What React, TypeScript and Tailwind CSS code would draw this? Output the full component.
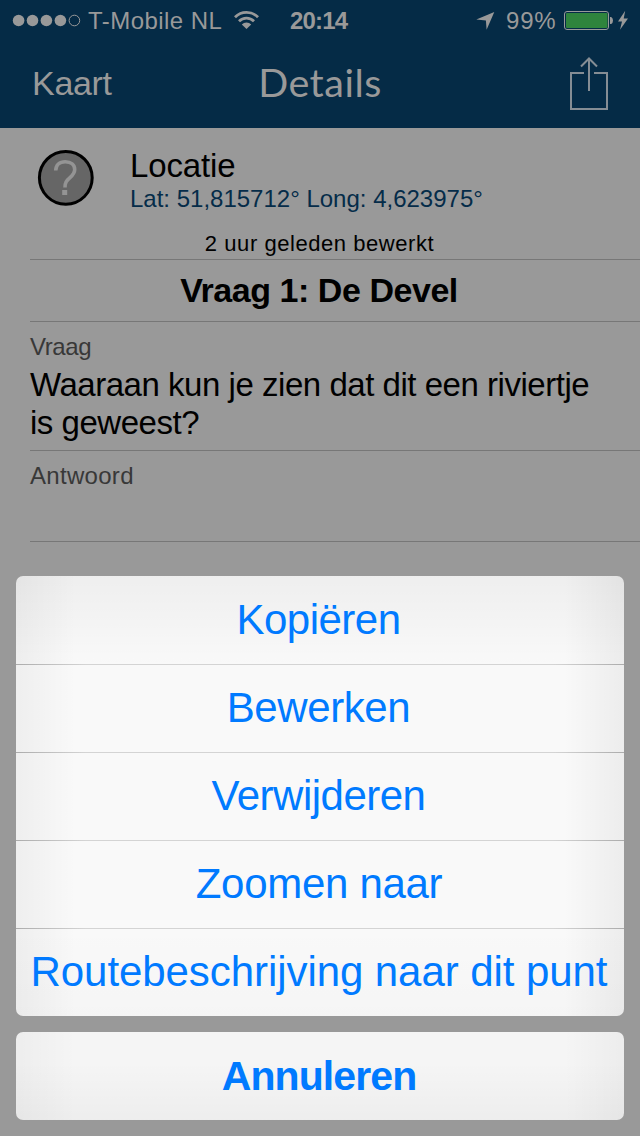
import React from "react";

const actions = [
  { label: "Kopiëren", style: "pr-[3px] tracking-[-0.5px]" },
  { label: "Bewerken", style: "pr-[3px] tracking-[-0.4px]" },
  { label: "Verwijderen", style: "pr-[3px] tracking-[-0.5px]" },
  { label: "Zoomen naar", style: "pr-[2px] tracking-[-0.3px]" },
  { label: "Routebeschrijving naar dit punt", style: "pr-[2px] tracking-[-0.07px]" },
];

function StatusBar() {
  return (
    <div className="flex h-10 items-center whitespace-nowrap text-[24px] leading-none">
      <svg className="ml-3 shrink-0" width="70" height="40" viewBox="12 0 70 40" fill="currentColor">
        <circle cx="18.6" cy="20.5" r="5.8" />
        <circle cx="32.5" cy="20.5" r="5.8" />
        <circle cx="46.4" cy="20.5" r="5.8" />
        <circle cx="60.4" cy="20.5" r="5.8" />
        <circle cx="74.4" cy="20.5" r="5.3" fill="none" stroke="currentColor" />
      </svg>
      <span className="ml-[6px] w-[145px] shrink-0 pt-[2px] tracking-[0.45px]">T-Mobile NL</span>
      <svg className="shrink-0" width="28" height="40" viewBox="233 0 28 40" fill="none" stroke="currentColor" strokeWidth="2.8">
        <path d="M235 17.2a16.3 16.3 0 0 1 23 0" />
        <path d="M239 21.2a10.6 10.6 0 0 1 15 0" />
        <path d="M246.5 29L241.8 24.5a6.7 6.7 0 0 1 9.4 0Z" fill="currentColor" stroke="none" />
      </svg>
      <span className="ml-[29px] w-[185px] shrink-0 pt-[2px] font-bold tracking-[-0.8px]">20:14</span>
      <svg className="shrink-0" width="20" height="40" viewBox="475 0 20 40" fill="currentColor">
        <path d="M494.3 12L486.6 29.8L485.9 20.6L476.3 19.6Z" />
      </svg>
      <span className="ml-[11px] w-[57px] shrink-0 pt-[2px] tracking-[0.8px]">99%</span>
      <svg className="shrink-0" width="68" height="40" viewBox="563 0 68 40">
        <rect x="564.5" y="11.5" width="44" height="18" rx="2.5" fill="none" stroke="currentColor" />
        <rect x="566" y="13" width="41.5" height="15" rx="1" fill="#2f843d" />
        <path d="M610 17h1.2q1.8 1.2 1.8 3.5t-1.8 3.5H610Z" fill="currentColor" />
        <path d="M625.2 10.8L618 21.4H622L620 29.8L628 18.6H623.7Z" fill="currentColor" />
      </svg>
    </div>
  );
}

function NavBar() {
  return (
    <div className="grid h-[88px] grid-cols-3 items-center">
      <span className="pb-[2px] pl-8 text-[34px] leading-none tracking-[-0.3px]">Kaart</span>
      <span className="pb-[5px] text-center font-[Lato] text-[39.5px] leading-none tracking-[0.5px]">Details</span>
      <svg className="ml-auto mr-[30px] text-[#858d94]" width="42" height="56" viewBox="568 56 42 56" fill="none" stroke="currentColor" strokeWidth="2">
        <path d="M584 73H571V109H607V73H594" />
        <path d="M589 91V59M581 66.5L589 58.5L597 66.5" />
      </svg>
    </div>
  );
}

function LocationRow() {
  return (
    <div className="flex h-[92px]">
      <svg className="ml-9 mt-5 shrink-0" width="60" height="60" viewBox="36 148 60 60">
        <circle cx="65.8" cy="177.8" r="26.4" fill="#666" stroke="#000" strokeWidth="3" />
        <path
          d="M55.7 170.5C55.8 165 59.5 161.7 65.3 161.7C71 161.7 74.7 165 74.7 169.5C74.7 173 73.2 174.8 70 177.6C66.4 180.8 65 182.2 65 187.5"
          fill="none"
          stroke="#949494"
          strokeWidth="3.6"
        />
        <rect x="62.2" y="190" width="5" height="5" fill="#949494" />
      </svg>
      <div className="ml-[34px] whitespace-nowrap">
        <div className="mt-[19px] text-[33px] leading-[38px] tracking-[-0.15px]">Locatie</div>
        <div className="text-[24px] leading-[28px] text-[#052c49]">
          Lat: 51,815712° Long: 4,623975°
        </div>
      </div>
    </div>
  );
}

export default function App() {
  return (
    <div className="relative h-[1136px] w-[640px] overflow-hidden bg-[#999] font-['Liberation_Sans',Arial,sans-serif] text-black">
      <header className="h-32 bg-[#052b46] text-[#999]">
        <StatusBar />
        <NavBar />
      </header>

      <main>
        <LocationRow />
        <div className="h-[39px] pr-[1px] pt-[11px] text-center text-[22px] leading-[26px] tracking-[0.55px]">
          2 uur geleden bewerkt
        </div>
        <div className="ml-[30px] whitespace-nowrap">
          <h1 className="h-[62px] border-t border-[#777] pr-[32px] text-center text-[34px] font-bold leading-[61px] tracking-[-0.45px]">
            Vraag 1: De Devel
          </h1>
          <section className="h-[129px] border-t border-[#777] pt-[11px]">
            <h2 className="text-[24px] leading-[28px] tracking-[-0.4px] text-[#383838]">Vraag</h2>
            <p className="mt-[5px] text-[33px] leading-[38px] tracking-[-0.47px]">
              Waaraan kun je zien dat dit een riviertje
              <br />
              is geweest?
            </p>
          </section>
          <section className="h-[92px] border-y border-[#777] pt-[11px]">
            <h2 className="text-[24px] leading-[28px] tracking-[0.3px] text-[#383838]">Antwoord</h2>
          </section>
        </div>
      </main>

      <div className="absolute inset-x-4 bottom-4 flex flex-col gap-4 text-[42px] leading-none text-[#007aff]">
        <div className="flex flex-col overflow-hidden rounded-[7px] bg-[#f9f9f9] bg-[linear-gradient(to_right,rgba(0,0,0,0.045),transparent_60px,transparent_548px,rgba(0,0,0,0.05)),linear-gradient(to_bottom,rgba(0,0,0,0.045),transparent_90px,transparent_350px,rgba(0,0,0,0.015))]">
          {actions.map(({ label, style }) => (
            <button
              key={label}
              className="group relative flex h-[88px] items-center justify-center whitespace-nowrap"
            >
              <span className="absolute inset-x-0 top-0 h-px bg-[linear-gradient(to_right,#acacac,#d4d4d4_70px,#d4d4d4_538px,#acacac)] group-first:hidden" />
              <span className={style}>{label}</span>
            </button>
          ))}
        </div>
        <button className="flex h-[88px] items-center justify-center rounded-[7px] bg-[#f5f5f5] bg-[linear-gradient(to_right,rgba(0,0,0,0.03),transparent_60px,transparent_548px,rgba(0,0,0,0.035)),linear-gradient(to_bottom,transparent_30px,rgba(0,0,0,0.03))] pr-[2px] text-[41px] font-bold tracking-[-0.9px]">
          Annuleren
        </button>
      </div>
    </div>
  );
}
